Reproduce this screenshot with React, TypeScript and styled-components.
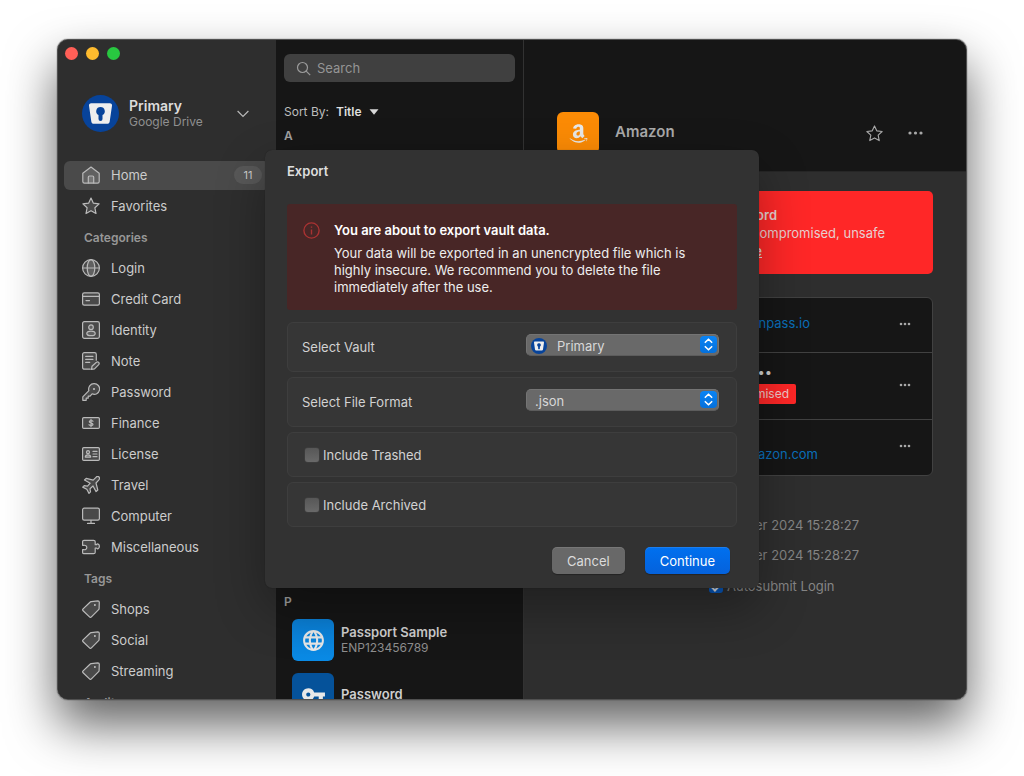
import React from "react";
import styled, { createGlobalStyle } from "styled-components";
import { FaAmazon } from "react-icons/fa";
import { MdLanguage, MdVpnKey } from "react-icons/md";

const GlobalStyle = createGlobalStyle`
  * { box-sizing: border-box; }
  body {
    margin: 0;
    background: #fff;
    font-family: Inter, "Liberation Sans", sans-serif;
    font-size: 13px;
    line-height: 16px;
    color: #d2d2d2;
  }
  button, input, select { font: inherit; color: inherit; }
  button { border: 0; padding: 0; background: none; text-align: left; }
  h1, h2, h3, p, ul { margin: 0; padding: 0; font-size: inherit; font-weight: inherit; }
  ul { list-style: none; }
`;

/* ---------- window ---------- */

const Page = styled.div`
  height: 100vh;
  min-height: 560px;
  padding: 39px 57px 76px;
  overflow: hidden;
`;

const Window = styled.div`
  position: relative;
  height: 100%;
  display: grid;
  grid-template-columns: 218px 248px minmax(0, 1fr);
  overflow: hidden;
  background: #2e2e2e;
  border: 1px solid #505050;
  border-radius: 11px;
`;

const WindowShadow = styled.div`
  height: 100%;
  border-radius: 11px;
  box-shadow: 0 0 1px #000, 0 25px 50px rgba(0, 0, 0, 0.62);
`;

/* ---------- sidebar ---------- */

const Sidebar = styled.aside`
  min-height: 0;
  padding: 7px 6px 0;
  overflow: hidden;
  background: #2e2e2e;
`;

const Lights = styled.div`
  display: flex;
  gap: 8px;
  padding-left: 1px;
`;

const Light = styled.button<{ $color: string }>`
  width: 13px;
  height: 13px;
  border-radius: 50%;
  background: ${(p) => p.$color};
`;

const Profile = styled.button`
  display: flex;
  align-items: center;
  width: 100%;
  margin: 35px 0 29px;
  padding: 0 21px 0 18px;
`;

const ProfileText = styled.span`
  display: flex;
  flex: 1;
  flex-direction: column;
  margin-left: 10px;
  color: #909090;
  font-size: 12px;
`;

const ProfileName = styled.strong`
  color: #dcdcdc;
  font-size: 14px;
  font-weight: 600;
`;

const Nav = styled.nav`
  display: flex;
  flex-direction: column;
  gap: 2px;
`;

const NavItem = styled.button<{ $active?: boolean }>`
  display: flex;
  flex-shrink: 0;
  align-items: center;
  gap: 11px;
  height: 29px;
  padding: 0 8px 1px 18px;
  border-radius: 6px;
  background: ${(p) => (p.$active ? "#4a4a4a" : "transparent")};
  color: #cccccc;
`;

const NavHeading = styled.h2`
  flex-shrink: 0;
  height: 29px;
  padding-left: 20px;
  color: #979797;
  font-size: 12px;
  font-weight: 600;
  line-height: 29px;
`;

const Count = styled.span`
  width: 28px;
  height: 18px;
  margin-left: auto;
  border-radius: 9px;
  background: #585858;
  font-size: 11px;
  line-height: 18px;
  text-align: center;
`;

/* ---------- item list ---------- */

const ListPane = styled.section`
  min-height: 0;
  padding: 14px 8px 0;
  overflow: hidden;
  background: #161616;
  border-right: 1px solid #323232;
`;

const SearchBox = styled.label`
  display: flex;
  align-items: center;
  gap: 6px;
  height: 28px;
  padding: 0 12px;
  border-radius: 6px;
  background: #404040;
  color: #9a9a9a;
`;

const SearchInput = styled.input`
  flex: 1;
  min-width: 0;
  height: 16px;
  padding: 0;
  border: 0;
  outline: 0;
  background: none;
  &::placeholder { color: #959595; opacity: 1; }
`;

const SortButton = styled.button`
  display: flex;
  align-items: center;
  gap: 7px;
  height: 18px;
  margin: 21px 0 6px;
  color: #bdbdbd;
  font-size: 12px;
  strong { color: #dedede; font-weight: 600; }
`;

const ListGroup = styled.section<{ $minHeight?: number }>`
  min-height: ${(p) => p.$minHeight ?? 0}px;
`;

const GroupTitle = styled.h2`
  height: 18px;
  color: #a0a0a0;
  font-size: 12px;
  font-weight: 600;
  line-height: 18px;
`;

const Items = styled.ul`
  display: flex;
  flex-direction: column;
  gap: 12px;
  padding: 8px 8px 0;
`;

const Item = styled.li`
  display: flex;
  align-items: center;
  gap: 7px;
`;

const Tile = styled.span<{ $color: string }>`
  display: grid;
  place-items: center;
  flex: none;
  width: 42px;
  height: 42px;
  border-radius: 6px;
  background: ${(p) => p.$color};
  color: #e8e8e8;
`;

const ItemText = styled.div`
  color: #8f8f8f;
  font-size: 12px;
`;

const ItemName = styled.h3`
  color: #cfcfcf;
  font-size: 13px;
  font-weight: 600;
`;

/* ---------- detail pane ---------- */

const DetailPane = styled.section`
  min-width: 0;
  min-height: 0;
  overflow: hidden;
`;

const DetailHeader = styled.header`
  display: flex;
  align-items: center;
  height: 132px;
  padding: 55px 43px 0 33px;
  background: #161616;
  border-bottom: 1px solid #262626;
`;

const DetailTitle = styled.h1`
  flex: 1;
  margin-left: 16px;
  padding-bottom: 3px;
  color: #a9a9a9;
  font-size: 15px;
  font-weight: 600;
`;

const HeaderActions = styled.div`
  display: flex;
  align-items: center;
  gap: 25px;
  color: #a8a8a8;
`;

const IconButton = styled.button`
  display: flex;
  color: #a8a8a8;
`;

const DetailBody = styled.div`
  padding: 19px 33px 0;
`;

const Warning = styled.div`
  height: 83px;
  padding: 15px 0;
  border-radius: 5px;
  background: #ff2727;
  color: #e8cfcf;
  line-height: 18px;
`;

const EndAligned = styled.div<{ $width: number; $strong?: boolean }>`
  width: ${(p) => p.$width}px;
  font-weight: ${(p) => (p.$strong ? 600 : 400)};
  text-align: right;
  white-space: nowrap;
`;

const WarningLink = styled.a`
  color: inherit;
  font-weight: 600;
`;

const Fields = styled.div`
  margin-top: 23px;
  border: 1px solid #414141;
  border-radius: 6px;
  background: #161616;
`;

const Field = styled.div<{ $height: number; $top: number }>`
  display: flex;
  justify-content: space-between;
  align-items: center;
  height: ${(p) => p.$height}px;
  padding: 0 21px 3px 0;
  & + & { border-top: 1px solid #414141; }
  > :first-child { align-self: flex-start; margin-top: ${(p) => p.$top}px; }
`;

const FieldLink = styled.a`
  color: #0a6fba;
  text-decoration: none;
`;

const Dots = styled.div`
  height: 20px;
  padding-right: 24px;
  color: #d0d0d0;
`;

const Badge = styled.span`
  display: inline-block;
  height: 20px;
  padding: 0 7px;
  border-radius: 2px;
  background: #ff2727;
  color: #efc9c9;
  font-size: 12px;
  line-height: 20px;
`;

const Meta = styled.div`
  margin-top: 34px;
  color: #858585;
  line-height: 30px;
`;

const Autosubmit = styled.label`
  display: flex;
  align-items: center;
  gap: 4px;
  height: 32px;
  padding-left: 152px;
  color: #858585;
`;

const BlueCheck = styled.input`
  appearance: none;
  display: grid;
  place-items: center;
  width: 14px;
  height: 14px;
  margin: 0;
  border-radius: 3px;
  background: #0758bd;
  &::after {
    content: "";
    width: 4px;
    height: 7px;
    border: solid #e0e0e0;
    border-width: 0 2px 2px 0;
    transform: rotate(45deg);
  }
`;

/* ---------- export dialog ---------- */

const Overlay = styled.div`
  position: absolute;
  inset: 0;
  display: flex;
  justify-content: center;
  align-items: flex-start;
  padding-top: 110px;
`;

const Dialog = styled.form`
  width: 494px;
  padding: 13px 22px 14px;
  border-radius: 7px;
  background: #323232;
  box-shadow: 0 0 1px rgba(0, 0, 0, 0.4), 0 20px 50px rgba(0, 0, 0, 0.32);
`;

const DialogTitle = styled.h1`
  color: #dedede;
  font-size: 13px;
  font-weight: 600;
`;

const Alert = styled.div`
  display: flex;
  gap: 14px;
  margin: 25px 0 12px;
  padding: 18px 16px 14px;
  border-radius: 3px;
  background: #482626;
  color: #ededed;
`;

const AlertTitle = styled.h2`
  margin-bottom: 7px;
  color: #fff;
  font-weight: 600;
`;

const AlertText = styled.p`
  line-height: 17px;
`;

const Options = styled.div`
  display: flex;
  flex-direction: column;
  gap: 5px;
`;

const Option = styled.div<{ $height: number }>`
  display: flex;
  align-items: center;
  justify-content: space-between;
  height: ${(p) => p.$height}px;
  padding: 0 17px 0 14px;
  border: 1px solid #3e3e3e;
  border-radius: 6px;
  background: #363636;
`;

const SelectWrap = styled.div`
  position: relative;
  width: 193px;
  margin-bottom: 4px;
`;

const Select = styled.select<{ $icon?: boolean }>`
  appearance: none;
  display: block;
  width: 100%;
  height: 22px;
  padding: 2px 24px 0 ${(p) => (p.$icon ? 30 : 8)}px;
  border: 1px solid #747474;
  border-bottom-color: #5c5c5c;
  border-radius: 5px;
  outline: 0;
  background: #696969;
  color: #d8d8d8;
`;

const SelectIcon = styled.span`
  position: absolute;
  top: 4px;
  left: 5px;
  display: flex;
  pointer-events: none;
`;

const Stepper = styled.span`
  position: absolute;
  top: 2px;
  right: 2px;
  display: flex;
  border-radius: 4px;
  background: linear-gradient(#0a84f5, #0470dc);
  pointer-events: none;
`;

const CheckLabel = styled.label`
  display: flex;
  align-items: center;
  gap: 4px;
  padding-left: 3px;
`;

const CheckBox = styled.input`
  appearance: none;
  width: 14px;
  height: 14px;
  margin: 0;
  border-radius: 3px;
  background: linear-gradient(#575757, #696969);
  box-shadow: 0 0 1px #777;
`;

const Actions = styled.div`
  display: flex;
  justify-content: flex-end;
  gap: 20px;
  padding: 20px 7px 0 0;
`;

const ActionButton = styled.button<{ $primary?: boolean }>`
  height: 27px;
  padding: 0 15px;
  border-radius: 5px;
  background: ${(p) => (p.$primary ? "linear-gradient(#0070ef, #0562dc)" : "#686868")};
  color: ${(p) => (p.$primary ? "#fff" : "#dcdcdc")};
  box-shadow: 0 1px 1px rgba(0, 0, 0, 0.3), inset 0 1px 0 rgba(255, 255, 255, 0.1);
`;

/* ---------- drawings ---------- */

function Logo({ size }: { size: number }) {
  return (
    <svg width={size} height={size} viewBox="0 0 37 37" aria-hidden="true">
      <circle cx="18.5" cy="18.5" r="18.5" fill="#07439a" />
      <path
        d="M9.2 8.3h18.6c1.5 0 2.5 1 2.2 2.5l-2.3 15.6c-.2 1.400-1.200 2.300-2.600 2.300H11.900c-1.400 0-2.400-.9-2.600-2.300L7 10.800c-.2-1.500.7-2.500 2.200-2.500z"
        fill="#eeeeee"
      />
      <path d="M18.500 12a4.300 4.300 0 0 0-2 8.100v3.900a2 2 0 0 0 4 0v-3.900a4.300 4.300 0 0 0-2-8.100z" fill="#07439a" />
    </svg>
  );
}

const GLYPHS: Record<string, React.ReactNode> = {
  home: (
    <>
      <path d="M.8 7.300 9 1l8.200 6.300v8.200c0 1-.7 1.700-1.700 1.700h-13C1.500 17.200.8 16.500.8 15.500z" />
      <path d="M6.300 17v-5.800c0-.7.500-1.200 1.200-1.200h3c.7 0 1.200.5 1.200 1.200V17" />
    </>
  ),
  star: (
    <path d="m9 1 2.400 5.200 5.700.7-4.200 3.900 1.100 5.700L9 13.700l-5 2.800 1.100-5.700L.9 6.900l5.700-.7z" />
  ),
  globe: (
    <>
      <circle cx="9" cy="9" r="8.400" />
      <ellipse cx="9" cy="9" rx="3.800" ry="8.400" />
      <path d="M.6 9h16.800" />
    </>
  ),
  card: (
    <>
      <rect x=".6" y="2.800" width="16.800" height="12.400" rx="1.600" />
      <path d="M.6 6.400h16.800M4 10.600h3.500" />
    </>
  ),
  identity: (
    <>
      <rect x=".6" y=".6" width="16.800" height="16.800" rx="1.800" />
      <circle cx="9" cy="6.200" r="2.300" />
      <ellipse cx="9" cy="12.400" rx="4.200" ry="2.300" />
    </>
  ),
  note: (
    <>
      <path d="M8.300 17.200H2.400c-1 0-1.800-.7-1.800-1.700V2.400C.6 1.400 1.400.7 2.400.7h10.200c1 0 1.700.7 1.700 1.700v5.800" />
      <path d="M3.700 4.400h7.200M3.700 7.400h7.200M3.700 10.400h4" fill="none" />
      <path d="m10 14.300 4.400-4c.8-.6 1.700-.5 2.300.1.600.7.600 1.500 0 2.200l-4.200 4.200-3 .5z" />
    </>
  ),
  key: (
    <>
      <path d="M12 .7a5.300 5.300 0 0 0-5.100 6.900L.8 13.800v3.500h3.400v-2.100h2v-2.100h1.900l2-2.300A5.300 5.300 0 1 0 12 .7z" />
      <circle cx="12" cy="6" r=".5" />
    </>
  ),
  finance: (
    <>
      <rect x=".6" y="3.600" width="16.800" height="10.800" rx="1.200" />
      <path d="M11 7.200C10.600 6.500 7.300 6.100 7.300 7.700S11 8.900 11 10.400s-3.500 1.300-4 .3M9 5.300v7.400" fill="none" />
    </>
  ),
  license: (
    <>
      <rect x=".6" y="2.600" width="16.800" height="12.800" rx="1.200" />
      <circle cx="6" cy="7.200" r="1.500" />
      <path d="M3.300 12.100c0-3.100 5.400-3.100 5.400 0zM11 6.400h4M11 9h4M11 11.700h4" />
    </>
  ),
  plane: (
    <path d="M17 1c-.9-.9-2.200-.5-3 .3l-2.800 2.800-7-1.700L2.500 4l5.700 3.200-2.700 3-3.300-.6-1.500 1.500 4.100 2.200 2.200 4.100 1.500-1.500-.5-3.200 3-2.700 3.100 5.600 1.700-1.600-1.800-7 2.700-2.900c.8-.8 1.200-2.200.3-3.100z" />
  ),
  computer: (
    <>
      <rect x=".6" y="1.200" width="16.800" height="12" rx="1.600" />
      <path d="M9 13.300v3.100M5.500 16.400h7" />
    </>
  ),
  puzzle: (
    <path d="M2 2.300h9.600c.9 0 1.600.6 1.600 1.500v2.900h1.300c.6-1.300 2.900-.9 2.900 1.600 0 2.600-2.300 3-2.900 1.700h-1.300v4.200c0 .9-.7 1.500-1.600 1.500H2c-.8 0-1.400-.6-1.400-1.300v-2.700h1.200c1.700.3 3-.6 3-2.200s-1.300-2.500-3-2.200H.6V3.600c0-.7.600-1.300 1.400-1.300z" />
  ),
  tag: (
    <>
      <path d="M9.200 1.600 15.800.9c.9 0 1.500.5 1.500 1.400l-.2 6.200c0 .5-.2.900-.5 1.200L9.400 16.900c-.6.6-1.300.6-1.900 0L1.100 10.800c-.6-.6-.6-1.300 0-1.900L8 2.200c.3-.4.700-.5 1.200-.6z" />
      <circle cx="12.900" cy="5" r=".9" fill="currentColor" stroke="none" />
    </>
  ),
};

function Glyph({ name, size = 18, plain }: { name: string; size?: number; plain?: boolean }) {
  return (
    <svg
      width={size}
      height={size}
      viewBox="0 0 18 18"
      fill={plain ? "none" : "rgba(255,255,255,0.13)"}
      stroke={plain ? "currentColor" : "#bababa"}
      strokeWidth="1.200"
      strokeLinejoin="round"
      strokeLinecap="round"
      aria-hidden="true"
    >
      {GLYPHS[name]}
    </svg>
  );
}

function More({ width }: { width: number }) {
  return (
    <svg width={width} height="4" viewBox={`0 0 ${width} 4`} fill="#a8a8a8" aria-hidden="true">
      <circle cx="2" cy="2" r={width > 12 ? 1.6 : 1.3} />
      <circle cx={width / 2} cy="2" r={width > 12 ? 1.6 : 1.3} />
      <circle cx={width - 2} cy="2" r={width > 12 ? 1.6 : 1.3} />
    </svg>
  );
}

function StepperArrows() {
  return (
    <Stepper>
      <svg width="17" height="17" viewBox="0 0 17 17" fill="none" stroke="#fff" strokeWidth="1.600" strokeLinecap="round" strokeLinejoin="round" aria-hidden="true">
        <path d="M5.300 6.300 8.500 3.200l3.200 3.100M5.300 10.700l3.200 3.100 3.200-3.100" />
      </svg>
    </Stepper>
  );
}

/* ---------- content ---------- */

const CATEGORIES = [
  ["globe", "Login"],
  ["card", "Credit Card"],
  ["identity", "Identity"],
  ["note", "Note"],
  ["key", "Password"],
  ["finance", "Finance"],
  ["license", "License"],
  ["plane", "Travel"],
  ["computer", "Computer"],
  ["puzzle", "Miscellaneous"],
];

const TAGS = ["Shops", "Social", "Streaming"];

export default function App() {
  return (
    <Page>
      <GlobalStyle />
      <WindowShadow>
        <Window>
          <Sidebar>
            <Lights>
              <Light $color="#ff5f57" aria-label="Close" />
              <Light $color="#febb2e" aria-label="Minimize" />
              <Light $color="#28c840" aria-label="Zoom" />
            </Lights>
            <Profile>
              <Logo size={37} />
              <ProfileText>
                <ProfileName>Primary</ProfileName>
                Google Drive
              </ProfileText>
              <svg width="12" height="8" viewBox="0 0 12 8" fill="none" stroke="#b8b8b8" strokeWidth="1.200" aria-hidden="true">
                <path d="m.6 1 5.400 5.500L11.400 1" />
              </svg>
            </Profile>
            <Nav>
              <NavItem $active>
                <Glyph name="home" />
                Home
                <Count>11</Count>
              </NavItem>
              <NavItem>
                <Glyph name="star" />
                Favorites
              </NavItem>
              <NavHeading>Categories</NavHeading>
              {CATEGORIES.map(([icon, label]) => (
                <NavItem key={label}>
                  <Glyph name={icon} />
                  {label}
                </NavItem>
              ))}
              <NavHeading>Tags</NavHeading>
              {TAGS.map((label) => (
                <NavItem key={label}>
                  <Glyph name="tag" />
                  {label}
                </NavItem>
              ))}
              <NavHeading>Audit</NavHeading>
            </Nav>
          </Sidebar>

          <ListPane>
            <SearchBox>
              <svg width="15" height="15" viewBox="0 0 15 15" fill="none" stroke="currentColor" strokeWidth="1.200" aria-hidden="true">
                <circle cx="6.500" cy="6.500" r="5" />
                <path d="m10.200 10.200 4 4" />
              </svg>
              <SearchInput type="search" placeholder="Search" aria-label="Search" />
            </SearchBox>
            <SortButton>
              <span>Sort By:</span>
              <strong>Title</strong>
              <svg width="10" height="6" viewBox="0 0 10 6" fill="#d8d8d8" aria-hidden="true">
                <path d="M.5.300h9L5 5.800z" />
              </svg>
            </SortButton>
            <ListGroup $minHeight={466}>
              <GroupTitle>A</GroupTitle>
            </ListGroup>
            <ListGroup>
              <GroupTitle>P</GroupTitle>
              <Items>
                <Item>
                  <Tile $color="linear-gradient(#0a7fd6, #0a8be6)">
                    <MdLanguage size={25} />
                  </Tile>
                  <ItemText>
                    <ItemName>Passport Sample</ItemName>
                    ENP123456789
                  </ItemText>
                </Item>
                <Item>
                  <Tile $color="#05529a">
                    <MdVpnKey size={25} />
                  </Tile>
                  <ItemText>
                    <ItemName>Password</ItemName>
                  </ItemText>
                </Item>
              </Items>
            </ListGroup>
          </ListPane>

          <DetailPane>
            <DetailHeader>
              <Tile $color="#fc8b05">
                <FaAmazon size={21} />
              </Tile>
              <DetailTitle>Amazon</DetailTitle>
              <HeaderActions>
                <IconButton aria-label="Favorite">
                  <Glyph name="star" size={17} plain />
                </IconButton>
                <IconButton aria-label="More">
                  <More width={15} />
                </IconButton>
              </HeaderActions>
            </DetailHeader>
            <DetailBody>
              <Warning>
                <EndAligned $width={220} $strong>Password</EndAligned>
                <EndAligned $width={328}>compromised, unsafe</EndAligned>
                <EndAligned $width={205}>
                  <WarningLink href="#">more</WarningLink>
                </EndAligned>
              </Warning>
              <Fields>
                <Field $height={54} $top={17}>
                  <EndAligned $width={252}>
                    <FieldLink href="#">enpass.io</FieldLink>
                  </EndAligned>
                  <IconButton aria-label="More"><More width={12} /></IconButton>
                </Field>
                <Field $height={67} $top={11}>
                  <EndAligned $width={238}>
                    <Dots>••••</Dots>
                    <Badge>Compromised</Badge>
                  </EndAligned>
                  <IconButton aria-label="More"><More width={12} /></IconButton>
                </Field>
                <Field $height={56} $top={26}>
                  <EndAligned $width={260}>
                    <FieldLink href="#">amazon.com</FieldLink>
                  </EndAligned>
                  <IconButton aria-label="More"><More width={12} /></IconButton>
                </Field>
              </Fields>
              <Meta>
                <EndAligned $width={302}>September 2024 15:28:27</EndAligned>
                <EndAligned $width={302}>September 2024 15:28:27</EndAligned>
              </Meta>
              <Autosubmit>
                <BlueCheck type="checkbox" defaultChecked />
                Autosubmit Login
              </Autosubmit>
            </DetailBody>
          </DetailPane>

          <Overlay>
            <Dialog aria-labelledby="export-title" onSubmit={(e) => e.preventDefault()}>
              <DialogTitle id="export-title">Export</DialogTitle>
              <Alert role="alert">
                <svg width="17" height="17" viewBox="0 0 17 17" fill="none" stroke="#a93232" strokeWidth="1.400" aria-hidden="true">
                  <circle cx="8.500" cy="8.500" r="7.600" />
                  <path d="M8.500 7.400v5M8.500 4.400v1.400" />
                </svg>
                <div>
                  <AlertTitle>You are about to export vault data.</AlertTitle>
                  <AlertText>
                    Your data will be exported in an unencrypted file which is
                    <br />
                    highly insecure. We recommend you to delete the file
                    <br />
                    immediately after the use.
                  </AlertText>
                </div>
              </Alert>
              <Options>
                <Option $height={50}>
                  <label htmlFor="vault">Select Vault</label>
                  <SelectWrap>
                    <Select id="vault" $icon>
                      <option>Primary</option>
                    </Select>
                    <SelectIcon><Logo size={16} /></SelectIcon>
                    <StepperArrows />
                  </SelectWrap>
                </Option>
                <Option $height={50}>
                  <label htmlFor="format">Select File Format</label>
                  <SelectWrap>
                    <Select id="format">
                      <option>.json</option>
                    </Select>
                    <StepperArrows />
                  </SelectWrap>
                </Option>
                <Option $height={45}>
                  <CheckLabel>
                    <CheckBox type="checkbox" />
                    Include Trashed
                  </CheckLabel>
                </Option>
                <Option $height={45}>
                  <CheckLabel>
                    <CheckBox type="checkbox" />
                    Include Archived
                  </CheckLabel>
                </Option>
              </Options>
              <Actions>
                <ActionButton type="button">Cancel</ActionButton>
                <ActionButton type="submit" $primary>Continue</ActionButton>
              </Actions>
            </Dialog>
          </Overlay>
        </Window>
      </WindowShadow>
    </Page>
  );
}
